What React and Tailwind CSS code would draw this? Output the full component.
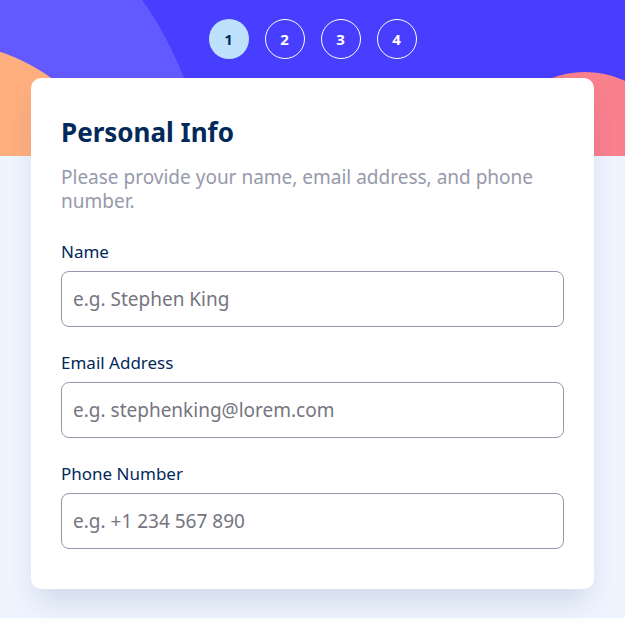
import React, { useState } from "react";

const steps = [1, 2, 3, 4];

const fields = [
  { name: "name", label: "Name", placeholder: "e.g. Stephen King", type: "text" },
  { name: "email", label: "Email Address", placeholder: "e.g. stephenking@lorem.com", type: "email" },
  { name: "phone", label: "Phone Number", placeholder: "e.g. +1 234 567 890", type: "tel" },
];

const HeaderArt = () => (
  <svg className="absolute inset-0 w-full h-full" viewBox="0 0 625 156" preserveAspectRatio="none">
    <rect width="625" height="156" fill="#483EFF" />
    <path d="M0 0 H142 Q172 40 196 110 L200 156 H0 Z" fill="#6259FF" />
    <circle cx="-60" cy="232" r="190" fill="#FFAF7E" />
    <circle cx="585" cy="166" r="94" fill="#F9818E" />
  </svg>
);

const App = () => {
  const [step, setStep] = useState(1);
  const [form, setForm] = useState({ name: "", email: "", phone: "" });

  const handleChange = (e) => {
    setForm({ ...form, [e.target.name]: e.target.value });
  };

  return (
    <div className="min-h-screen bg-white font-['Noto_Sans',sans-serif]">
      <div className="relative bg-[#EFF5FF] min-h-[618px]">
        {/* header decoration */}
        <div className="absolute top-0 left-0 right-0 h-[156px] overflow-hidden">
          <HeaderArt />
        </div>

        <div className="relative flex justify-center gap-4 pt-[19px]">
          {steps.map((n) => (
            <button
              key={n}
              onClick={() => setStep(n)}
              className={`w-10 h-10 rounded-full flex items-center justify-center text-[15px] font-bold ${
                step === n ? "bg-[#BEE2FD] text-[#02295A]" : "border border-white text-white"
              }`}
            >
              {n}
            </button>
          ))}
        </div>

        <section className="relative mx-[31px] mt-[19px] bg-white rounded-[10px] px-[30px] pt-[36px] pb-[40px] shadow-[0_18px_30px_-6px_rgba(2,41,90,0.14)]">
          <h1 className="text-[26px] leading-[36px] font-bold text-[#02295A]">Personal Info</h1>
          <p className="mt-[15px] text-[19px] leading-[24px] text-[#9699AB]">
            Please provide your name, email address, and phone number.
          </p>

          <form className="mt-[27px] flex flex-col gap-6">
            {fields.map((f) => (
              <div key={f.name} className="flex flex-col gap-[7px]">
                <label className="text-[17px] leading-[24px] text-[#02295A]">{f.label}</label>
                <input
                  name={f.name}
                  type={f.type}
                  value={form[f.name]}
                  onChange={handleChange}
                  placeholder={f.placeholder}
                  className="h-[56px] w-full rounded-lg border border-[#9699AB] px-[11px] text-[19px] text-[#02295A] placeholder:text-[#75757f] outline-none"
                />
              </div>
            ))}
          </form>
        </section>
      </div>
    </div>
  );
};

export default App;
